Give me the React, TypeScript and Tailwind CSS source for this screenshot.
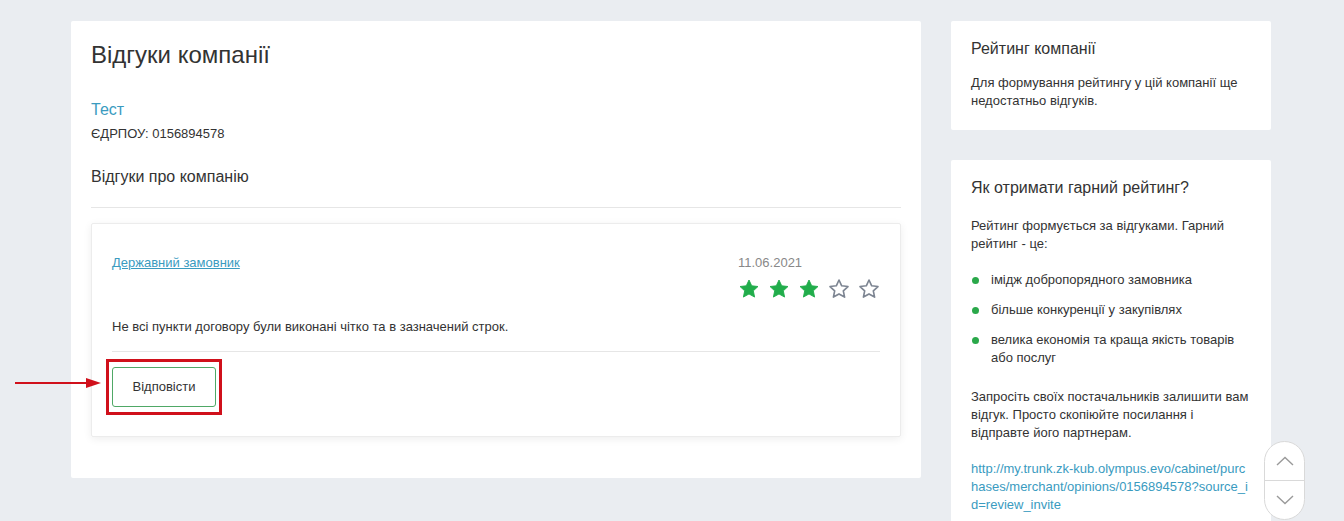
import React from "react";

const font = { fontFamily: '"Liberation Sans", Arial, sans-serif' };

function Star({ filled }: { filled: boolean }) {
  return (
    <svg width="22" height="22" viewBox="0 0 24 24" className="block">
      <path
        d="M12 2.2l2.95 6.3 6.85.8-5.08 4.7 1.37 6.8L12 17.4l-6.09 3.4 1.37-6.8L2.2 9.3l6.85-.8z"
        fill={filled ? "#21ad4b" : "none"}
        stroke={filled ? "#21ad4b" : "#7d8592"}
        strokeWidth={filled ? 1 : 1.8}
        strokeLinejoin="round"
      />
    </svg>
  );
}

function Bullet({ children }: { children: React.ReactNode }) {
  return (
    <li className="flex">
      <span className="mt-[6px] mr-[12px] ml-[1px] h-[7px] w-[7px] shrink-0 rounded-full bg-[#2aa84a]" />
      <span>{children}</span>
    </li>
  );
}

export default function App() {
  return (
    <div
      className="relative min-h-[521px] bg-[#eaedf1] pl-[71px] pt-[21px] text-[#333]"
      style={font}
    >
      <div className="flex items-start gap-[30px]">
        {/* main column */}
        <div className="w-[850px] rounded-[2px] bg-white px-5 pb-[41px] pt-5">
          <h1 className="text-[24px] leading-[28px]">Відгуки компанії</h1>
          <div className="mt-[31px] text-[16px] leading-5 text-[#3a9bbf]">Тест</div>
          <div className="mt-[5px] text-[13px] leading-[18px]">ЄДРПОУ: 0156894578</div>
          <h2 className="mt-6 text-[16px] leading-5">Відгуки про компанію</h2>
          <hr className="mt-5 border-[#e6e6e6]" />

          <div className="mt-[15px] rounded-[2px] border border-[#ececec] px-5 pb-[21px] pt-[30px] shadow-[0_2px_8px_rgba(0,0,0,0.07)]">
            <div className="flex items-start justify-between">
              <a href="#" className="text-[13px] leading-[18px] text-[#3a9bbf] underline">
                Державний замовник
              </a>
              <div>
                <div className="text-[13px] leading-[18px] text-[#888]">11.06.2021</div>
                <div className="mt-[6px] flex gap-2">
                  <Star filled />
                  <Star filled />
                  <Star filled />
                  <Star filled={false} />
                  <Star filled={false} />
                </div>
              </div>
            </div>
            <p className="mt-[18px] text-[13px] leading-[18px]">
              Не всі пункти договору були виконані чітко та в зазначений строк.
            </p>
            <hr className="mt-[15px] border-[#e6e6e6]" />
            <div className="-ml-[6px] mt-[7px] flex w-fit border-[3px] border-[#d0101b] px-[3px] py-[5px]">
              <button className="block h-10 w-[104px] rounded-[3px] border border-[#4fa866] bg-white text-[13px] text-[#333]">
                Відповісти
              </button>
            </div>
          </div>
        </div>

        {/* side column */}
        <div className="flex w-[320px] flex-col gap-[30px]">
          <div className="rounded-[2px] bg-white px-5 pb-5 pt-[18px]">
            <h3 className="text-[16px] leading-5">Рейтинг компанії</h3>
            <p className="mt-[15px] text-[13px] leading-[18px]">
              Для формування рейтингу у цій компанії ще недостатньо відгуків.
            </p>
          </div>
          <div className="rounded-[2px] bg-white px-5 pb-5 pt-[18px]">
            <h3 className="text-[16px] leading-5">Як отримати гарний рейтинг?</h3>
            <p className="mt-[19px] text-[13px] leading-[18px]">
              Рейтинг формується за відгуками. Гарний рейтинг - це:
            </p>
            <ul className="mt-[18px] flex flex-col gap-3 text-[13px] leading-[18px]">
              <Bullet>імідж добропорядного замовника</Bullet>
              <Bullet>більше конкуренції у закупівлях</Bullet>
              <Bullet>велика економія та краща якість товарів або послуг</Bullet>
            </ul>
            <p className="mt-[21px] text-[13px] leading-[18px]">
              Запросіть своїх постачальників залишити вам відгук. Просто скопіюйте посилання і
              відправте його партнерам.
            </p>
            <a
              href="#"
              className="mt-[18px] block break-all text-[13px] leading-[18px] text-[#3a9bbf]"
            >
              http://my.trunk.zk-kub.olympus.evo/cabinet/purchases/merchant/opinions/0156894578?source_id=review_invite
            </a>
          </div>
        </div>
      </div>

      {/* annotation arrow */}
      <svg className="absolute left-[14px] top-[377px]" width="90" height="12" viewBox="0 0 90 12">
        <line x1="1" y1="6" x2="76" y2="6" stroke="#d0101b" strokeWidth="2" />
        <path d="M72 1 L87 6 L72 11 Z" fill="#d0101b" />
      </svg>

      {/* scroll buttons */}
      <div className="absolute left-[1264px] top-[441px] flex h-[79px] w-[41px] flex-col rounded-full border border-[#d9d9d9] bg-white">
        <button className="flex flex-1 items-center justify-center border-b border-[#d9d9d9]">
          <svg width="18" height="10" viewBox="0 0 18 10" fill="none" stroke="#9a9a9a" strokeWidth="1.4">
            <path d="M1 9 L9 1.5 L17 9" />
          </svg>
        </button>
        <button className="flex flex-1 items-center justify-center">
          <svg width="18" height="10" viewBox="0 0 18 10" fill="none" stroke="#9a9a9a" strokeWidth="1.4">
            <path d="M1 1 L9 8.5 L17 1" />
          </svg>
        </button>
      </div>
    </div>
  );
}
